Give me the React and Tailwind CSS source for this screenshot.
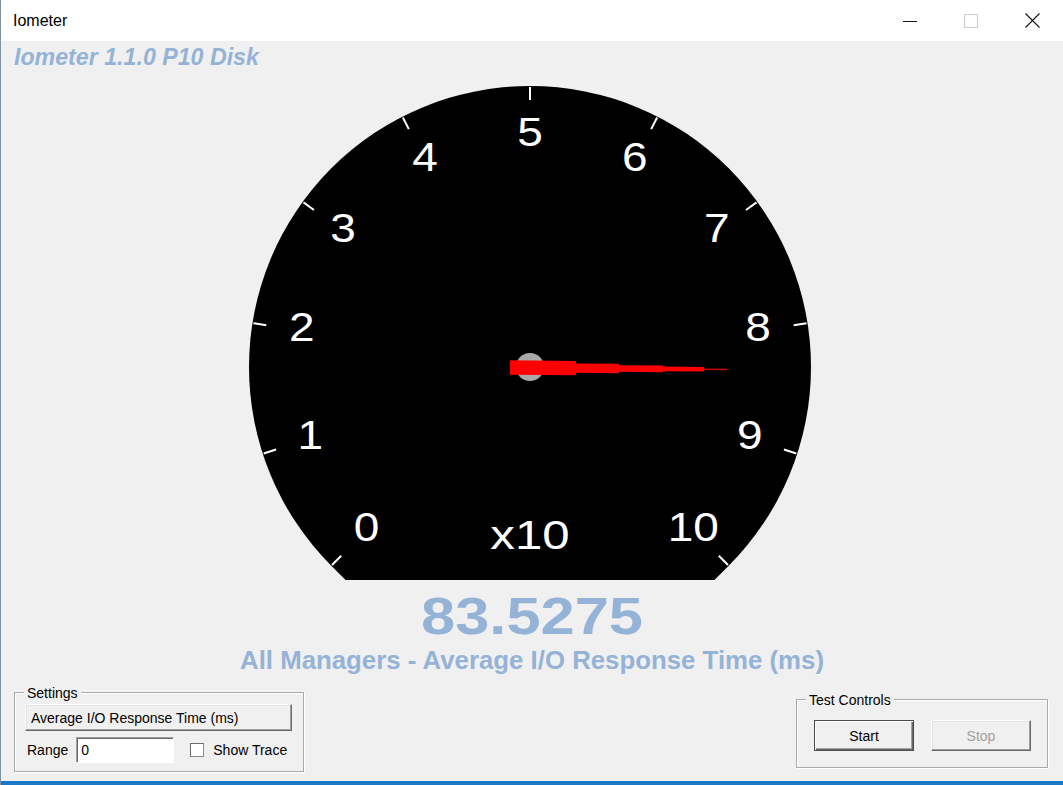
import React from 'react'

const CX = 529
const CY = 367
const R = 281

function Gauge() {
  const ticks = []
  const labels = []
  for (let i = 0; i <= 10; i++) {
    const a = ((-135 + 27 * i) * Math.PI) / 180
    const s = Math.sin(a)
    const c = Math.cos(a)
    ticks.push(
      <line key={'t' + i} x1={CX + 280 * s} y1={CY - 280 * c} x2={CX + 267 * s} y2={CY - 267 * c}
        stroke="#fff" strokeWidth={2} />
    )
    const lx = CX + 231 * s
    const ly = CY - 231 * c - 4
    labels.push(
      <text key={'l' + i} transform={`translate(${lx} ${ly + 14.3}) scale(1.15 1)`} textAnchor="middle"
        fill="#fff" fontSize={40} fontFamily="'Liberation Sans', Arial, sans-serif">{i}</text>
    )
  }

  return (
    <svg className="block" width="1062" height="500" viewBox="0 82 1062 500">
      <path d={`M330.3 565.7 A${R} ${R} 0 1 1 727.7 565.7 L713.4 580 L344.6 580 Z`} fill="#000" />
      {ticks}
      {labels}
      <text transform="translate(529 549.3) scale(1.2 1)" textAnchor="middle" fill="#fff" fontSize={41}
        fontFamily="'Liberation Sans', Arial, sans-serif">x10</text>
      <circle cx={CX} cy={CY} r={14} fill="#a9a9a9" />
      <g transform={`rotate(0.5 ${CX} ${CY})`}>
        <polygon fill="#ff0000"
          points="509,360.5 575,360.5 575,363 618,363 618,364.4 662,364.4 662,365.4 703,365.4 703,370 662,370 662,371 618,371 618,372.4 575,372.4 575,374.9 509,374.9" />
        <rect x={703} y={367} width={23} height={1.5} fill="#c80000" />
      </g>
    </svg>
  )
}

function WinButton({ children, isDefault, disabled, className = '' }) {
  const look = isDefault
    ? 'border border-[#4b4b4b] shadow-[inset_1px_1px_0_#fff,inset_-1px_-1px_0_#696969,inset_-2px_-2px_0_#a0a0a0]'
    : 'border border-t-white border-l-white border-r-[#696969] border-b-[#696969] shadow-[inset_-1px_-1px_0_#a0a0a0,inset_1px_1px_0_#e3e3e3]'
  return (
    <div className={`bg-[#f0f0f0] text-[14px] leading-[16px] flex items-center ${look} ${disabled ? 'text-[#a0a0a0]' : 'text-black'} ${className}`}>
      {children}
    </div>
  )
}

function GroupBox({ label, className = '', children }) {
  return (
    <div className={`relative border border-[#a9a9a9] shadow-[inset_1px_1px_0_#fff,1px_1px_0_#fff] ${className}`}>
      <span className="absolute -top-[8px] left-[9px] px-[3px] bg-[#f0f0f0] text-[14px] leading-[16px] text-black whitespace-nowrap">
        {label}
      </span>
      {children}
    </div>
  )
}

export default function App() {
  return (
    <div className="w-[1063px] h-[785px] overflow-hidden bg-white flex flex-col border-l border-[#8592a0] font-['Liberation_Sans',Arial,sans-serif]">
      {/* title bar */}
      <div className="h-[41px] shrink-0 flex items-center bg-white">
        <span className="pl-[12px] text-[16px] text-black">Iometer</span>
        <div className="ml-auto flex h-full">
          <div className="w-[61px] flex items-center justify-center">
            <svg width="14" height="14" viewBox="0 0 14 14"><line x1="0" y1="7.5" x2="14" y2="7.5" stroke="#111" /></svg>
          </div>
          <div className="w-[61px] flex items-center justify-center">
            <svg width="14" height="14" viewBox="0 0 14 14"><rect x="0.5" y="0.5" width="13" height="13" fill="none" stroke="#cccccc" /></svg>
          </div>
          <div className="w-[62px] flex items-center justify-center">
            <svg width="15" height="15" viewBox="0 0 15 15"><path d="M0.5 0.5 L14.5 14.5 M14.5 0.5 L0.5 14.5" stroke="#111" strokeWidth="1.1" /></svg>
          </div>
        </div>
      </div>

      {/* client area */}
      <div className="flex-1 bg-[#f0f0f0] flex flex-col">
        <div className="h-[41px] shrink-0 pt-[3px] pl-[13px]">
          <span className="text-[23.2px] leading-[26px] font-bold italic text-[#95b3d7]">Iometer 1.1.0 P10 Disk</span>
        </div>

        <Gauge />

        <div className="mt-[8px] h-[52px] text-center">
          <span className="inline-block scale-x-[1.18] text-[52px] leading-[52px] font-bold text-[#95b3d7]">83.5275</span>
        </div>
        <div className="mt-[4px] text-center text-[25.8px] leading-[28px] font-bold text-[#95b3d7]">
          All Managers - Average I/O Response Time (ms)
        </div>

        <div className="mt-auto flex items-end justify-between pl-[13px] pr-[15px] pb-[9px]">
          <GroupBox label="Settings" className="w-[290px] h-[80px] pt-[11px] pl-[10px] pr-[10px]">
            <WinButton className="h-[27px] w-[267px] pl-[5px]">Average I/O Response Time (ms)</WinButton>
            <div className="mt-[6px] flex items-center h-[26px] text-[14px] text-black">
              <span className="pl-[2px]">Range</span>
              <div className="ml-[8px] w-[98px] h-[26px] bg-white border border-t-[#a0a0a0] border-l-[#a0a0a0] border-r-white border-b-white shadow-[inset_1px_1px_0_#696969] pl-[4px] flex items-center">
                0
              </div>
              <div className="ml-[16px] w-[14px] h-[14px] bg-white border border-[#8a8a8a] border-t-[#6b6b6b] border-l-[#6b6b6b]" />
              <span className="ml-[9px]">Show Trace</span>
            </div>
          </GroupBox>

          <GroupBox label="Test Controls" className="mb-[4px] w-[252px] h-[69px] pt-[20px] pl-[17px] flex items-start gap-[17px]">
            <WinButton isDefault className="w-[100px] h-[31px] justify-center">Start</WinButton>
            <WinButton disabled className="w-[100px] h-[31px] justify-center">Stop</WinButton>
          </GroupBox>
        </div>
      </div>

      <div className="h-[4px] shrink-0 bg-[#1b79c9]" />
    </div>
  )
}
